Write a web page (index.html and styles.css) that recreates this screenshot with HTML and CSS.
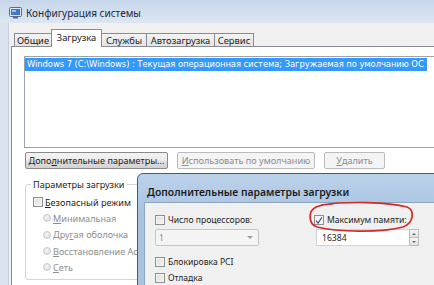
FILE: index.html
```html
<!DOCTYPE html>
<html lang="ru">
<head>
<meta charset="utf-8">
<link rel="stylesheet" href="styles.css">
</head>
<body>
<div class="win">
  <div class="titlebar">
    <svg class="appicon" width="13" height="12" viewBox="0 0 13 12">
      <rect x="0.5" y="0.5" width="12" height="9" rx="1" fill="#dfe6f0" stroke="#5b6c86"/>
      <rect x="2" y="2" width="9" height="6" fill="#3f78c8"/>
      <rect x="3" y="3" width="4" height="2" fill="#9cc3f0"/>
      <rect x="4" y="10" width="5" height="1.5" fill="#5b6c86"/>
    </svg>
    <span class="title">Конфигурация системы</span>
  </div>
  <div class="frame">
    <div class="client">
      <div class="tabs">
        <div class="tab t1">Общие</div>
        <div class="tab sel t2">Загрузка</div>
        <div class="tab t3">Службы</div>
        <div class="tab t4">Автозагрузка</div>
        <div class="tab t5">Сервис</div>
      </div>
      <div class="panel">
        <div class="list">
          <div class="item">Windows 7 (C:\Windows) : Текущая операционная система; Загружаемая по умолчанию ОС</div>
        </div>
        <div class="btnrow">
          <div class="btn b1">Допо<u>л</u>нительные параметры...</div>
          <div class="btn dis b2"><u>И</u>спользовать по умолчанию</div>
          <div class="btn dis b3"><u>У</u>далить</div>
        </div>
        <fieldset class="group">
          <legend>Параметры загрузки</legend>
          <div class="opt"><span class="chk"></span><span><u>Б</u>езопасный режим</span></div>
          <div class="opt sub off"><span class="radio"></span><span><u>М</u>инимальная</span></div>
          <div class="opt sub off"><span class="radio"></span><span>Дру<u>г</u>ая оболочка</span></div>
          <div class="opt sub off"><span class="radio"></span><span><u>В</u>осстановление Active Directory</span></div>
          <div class="opt sub off"><span class="radio"></span><span><u>С</u>еть</span></div>
        </fieldset>
      </div>
    </div>
  </div>

  <div class="dialog">
    <div class="dlg-title">Дополнительные параметры загрузки</div>
    <div class="dlg-body">
      <div class="dcol left">
        <div class="dopt"><span class="chk"></span><span>Число процессоров:</span></div>
        <div class="select"><span>1</span><span class="arrow"></span></div>
        <div class="dopt r3"><span class="chk"></span><span>Блокировка PCI</span></div>
        <div class="dopt r4"><span class="chk"></span><span>Отладка</span></div>
      </div>
      <div class="dcol right">
        <div class="dopt"><span class="chk on"><svg width="9" height="9" viewBox="0 0 9 9"><path d="M1.2 4.6 L3.4 7.6 L7.8 0.8" fill="none" stroke="#3a4a7a" stroke-width="1.3"/></svg></span><span>Максимум памяти:</span></div>
        <div class="numbox">
          <div class="num">16384</div>
          <div class="spin">
            <div class="sb"><span class="up"></span></div>
            <div class="sb"><span class="dn"></span></div>
          </div>
        </div>
      </div>
    </div>
  </div>

  <svg class="mark" width="108" height="32" viewBox="0 0 108 32">
    <path d="M14 4 C40 0 82 1 100 6 C108 9 107 22 96 26 C74 32 30 31 10 26 C1 23 1 10 9 6 C14 4 20 3 26 3" fill="none" stroke="#cf2a2a" stroke-width="1.7"/>
  </svg>
</div>
</body>
</html>
```

FILE: styles.css
```css
* { box-sizing: border-box; }
html, body { margin: 0; padding: 0; }
body {
  width: 434px;
  height: 285px;
  overflow: hidden;
  font-family: "Noto Sans", "Open Sans", sans-serif;
  font-size: 9.1px;
  color: #1e1e1e;
  background: #dbe5f0;
}
u { text-decoration: underline; text-underline-offset: 1px; }

.win {
  position: relative;
  width: 434px;
  height: 285px;
  overflow: hidden;
  background: #dae4f0;
}

.titlebar {
  height: 23px;
  display: flex;
  align-items: center;
  padding: 2px 0 0 9px;
  gap: 4px;
  background: linear-gradient(#c6d6ea, #dde7f2);
}
.title { font-size: 10px; color: #1d2a3c; }
.appicon { display: block; }

.frame {
  display: flex;
  height: 262px;
  padding-left: 8px;
}
.client {
  flex: 1;
  display: flex;
  flex-direction: column;
  background: #f0f0f0;
  padding: 6px 0 0 2px;
  border-left: 1px solid #c3cfdc;
}

.tabs {
  display: flex;
  align-items: flex-end;
  height: 17px;
  padding-left: 3px;
  font-size: 9.4px;
}
.tab {
  height: 13px;
  display: flex;
  align-items: center;
  justify-content: center;
  border: 1px solid #898c95;
  border-bottom: none;
  border-left: none;
  background: linear-gradient(#f3f3f3, #e3e3e3);
  white-space: nowrap;
}
.t1 { width: 38px; border-left: 1px solid #898c95; }
.t2 { width: 50px; }
.t3 { width: 45px; }
.t4 { width: 68px; }
.t5 { width: 39px; }
.tab.sel {
  height: 18px;
  margin-bottom: -1px;
  position: relative;
  z-index: 1;
  background: #ffffff;
  border-left: 1px solid #898c95;
  margin-left: -1px;
  width: 51px;
  align-items: flex-start;
  padding-top: 1px;
}

.panel {
  flex: 1;
  background: #ffffff;
  border-top: 1px solid #898c95;
  border-left: 1px solid #898c95;
  padding: 9px 0 0 12px;
}

.list {
  width: 440px;
  height: 92px;
  border: 1px solid #9da3ad;
  background: #fff;
  padding: 0;
}
.item {
  display: inline-block;
  height: 13px;
  line-height: 13px;
  padding: 0 3px 0 2px;
  background: #3399ff;
  color: #ffffff;
  font-family: "DejaVu Sans", sans-serif;
  font-size: 8.4px;
  white-space: nowrap;
  letter-spacing: -0.05px;
}

.btnrow {
  display: flex;
  gap: 9px;
  margin-top: 4px;
  padding-left: 1px;
}
.btn {
  height: 17px;
  display: flex;
  align-items: center;
  justify-content: center;
  border: 1px solid #8a8a8a;
  border-radius: 2px;
  background: linear-gradient(#f3f3f3 0%, #ececec 45%, #dedede 55%, #d2d2d2 100%);
  white-space: nowrap;
}
.b1 { width: 143px; }
.b2 { width: 138px; }
.b3 { width: 61px; }
.btn.dis {
  border-color: #b8bcc0;
  background: #f4f4f4;
  color: #8c8c8c;
}

.group {
  margin: 9px 0 0 1px;
  width: 220px;
  height: 102px;
  border: 1px solid #cdd6df;
  border-radius: 3px;
  padding: 3px 0 0 7px;
}
.group legend {
  padding: 0 2px;
  margin-left: -2px;
  line-height: 13px;
}
.opt {
  display: flex;
  align-items: center;
  height: 16.3px;
  white-space: nowrap;
}
.opt .chk { margin-right: 2px; }
.opt.sub { padding-left: 10px; }
.opt.off { color: #8d8d8d; }
.chk {
  width: 10px;
  height: 10px;
  border: 1px solid #8e8f8f;
  background: linear-gradient(135deg, #dcdcdc, #f6f6f6);
  box-shadow: inset 0 0 0 1px #f4f4f4;
  display: inline-flex;
  align-items: center;
  justify-content: center;
  flex: none;
}
.chk.on { background: #f7f7f7; }
.chk svg { display: block; }
.radio {
  width: 8px;
  height: 8px;
  border-radius: 50%;
  border: 1px solid #c9c9c9;
  background: radial-gradient(circle at 40% 40%, #f4f4f4, #dadada);
  margin-right: 2px;
  flex: none;
}

.dialog {
  position: absolute;
  left: 137px;
  top: 173px;
  width: 320px;
  height: 130px;
  border: 1px solid #485a70;
  border-radius: 6px 0 0 0;
  background: linear-gradient(#bcd2ea, #a8c3e0 40px, #a8c3e0);
  padding: 0 0 0 6px;
  display: flex;
  flex-direction: column;
  z-index: 5;
}
.dlg-title {
  height: 28px;
  display: flex;
  align-items: center;
  padding: 7px 0 0 3px;
  font-size: 10.4px;
  font-weight: 600;
  color: #1c1c1c;
  white-space: nowrap;
}
.dlg-body {
  flex: 1;
  background: #f0f0f0;
  border-left: 1px solid #8ea4bf;
  border-top: 1px solid #8ea4bf;
  display: grid;
  grid-template-columns: 159px auto;
  padding: 10px 0 0 10px;
  align-content: start;
  font-size: 8.6px;
}
.dcol { display: flex; flex-direction: column; }
.dopt {
  display: flex;
  align-items: center;
  height: 14px;
  white-space: nowrap;
}
.dopt .chk { margin-right: 3px; }
.select {
  margin-top: 2px;
  width: 104px;
  height: 17px;
  border: 1px solid #c3c7cc;
  border-radius: 2px;
  background: #f4f4f4;
  display: flex;
  align-items: center;
  justify-content: space-between;
  padding: 0 5px 0 3px;
  color: #8a8a8a;
}
.arrow {
  width: 0;
  height: 0;
  border-left: 3px solid transparent;
  border-right: 3px solid transparent;
  border-top: 3px solid #a0a0a0;
}
.r3 { margin-top: 9px; height: 13px; }
.r4 { margin-top: 3px; height: 13px; }

.numbox {
  margin: 2px 0 0 2px;
  display: flex;
  height: 17px;
}
.num {
  width: 93px;
  height: 17px;
  background: #fff;
  border: 1px solid #d0d4d9;
  border-right: none;
  display: flex;
  align-items: center;
  padding-left: 5px;
}
.spin {
  width: 10px;
  display: flex;
  flex-direction: column;
}
.sb {
  flex: 1;
  border: 1px solid #b9bec4;
  background: linear-gradient(#f6f6f6, #e2e2e2);
  display: flex;
  align-items: center;
  justify-content: center;
}
.sb + .sb { border-top: none; }
.up, .dn {
  width: 0;
  height: 0;
  border-left: 2px solid transparent;
  border-right: 2px solid transparent;
}
.up { border-bottom: 2px solid #6a6a6a; }
.dn { border-top: 2px solid #6a6a6a; }

.mark {
  position: absolute;
  left: 307px;
  top: 201px;
  z-index: 6;
}
```
